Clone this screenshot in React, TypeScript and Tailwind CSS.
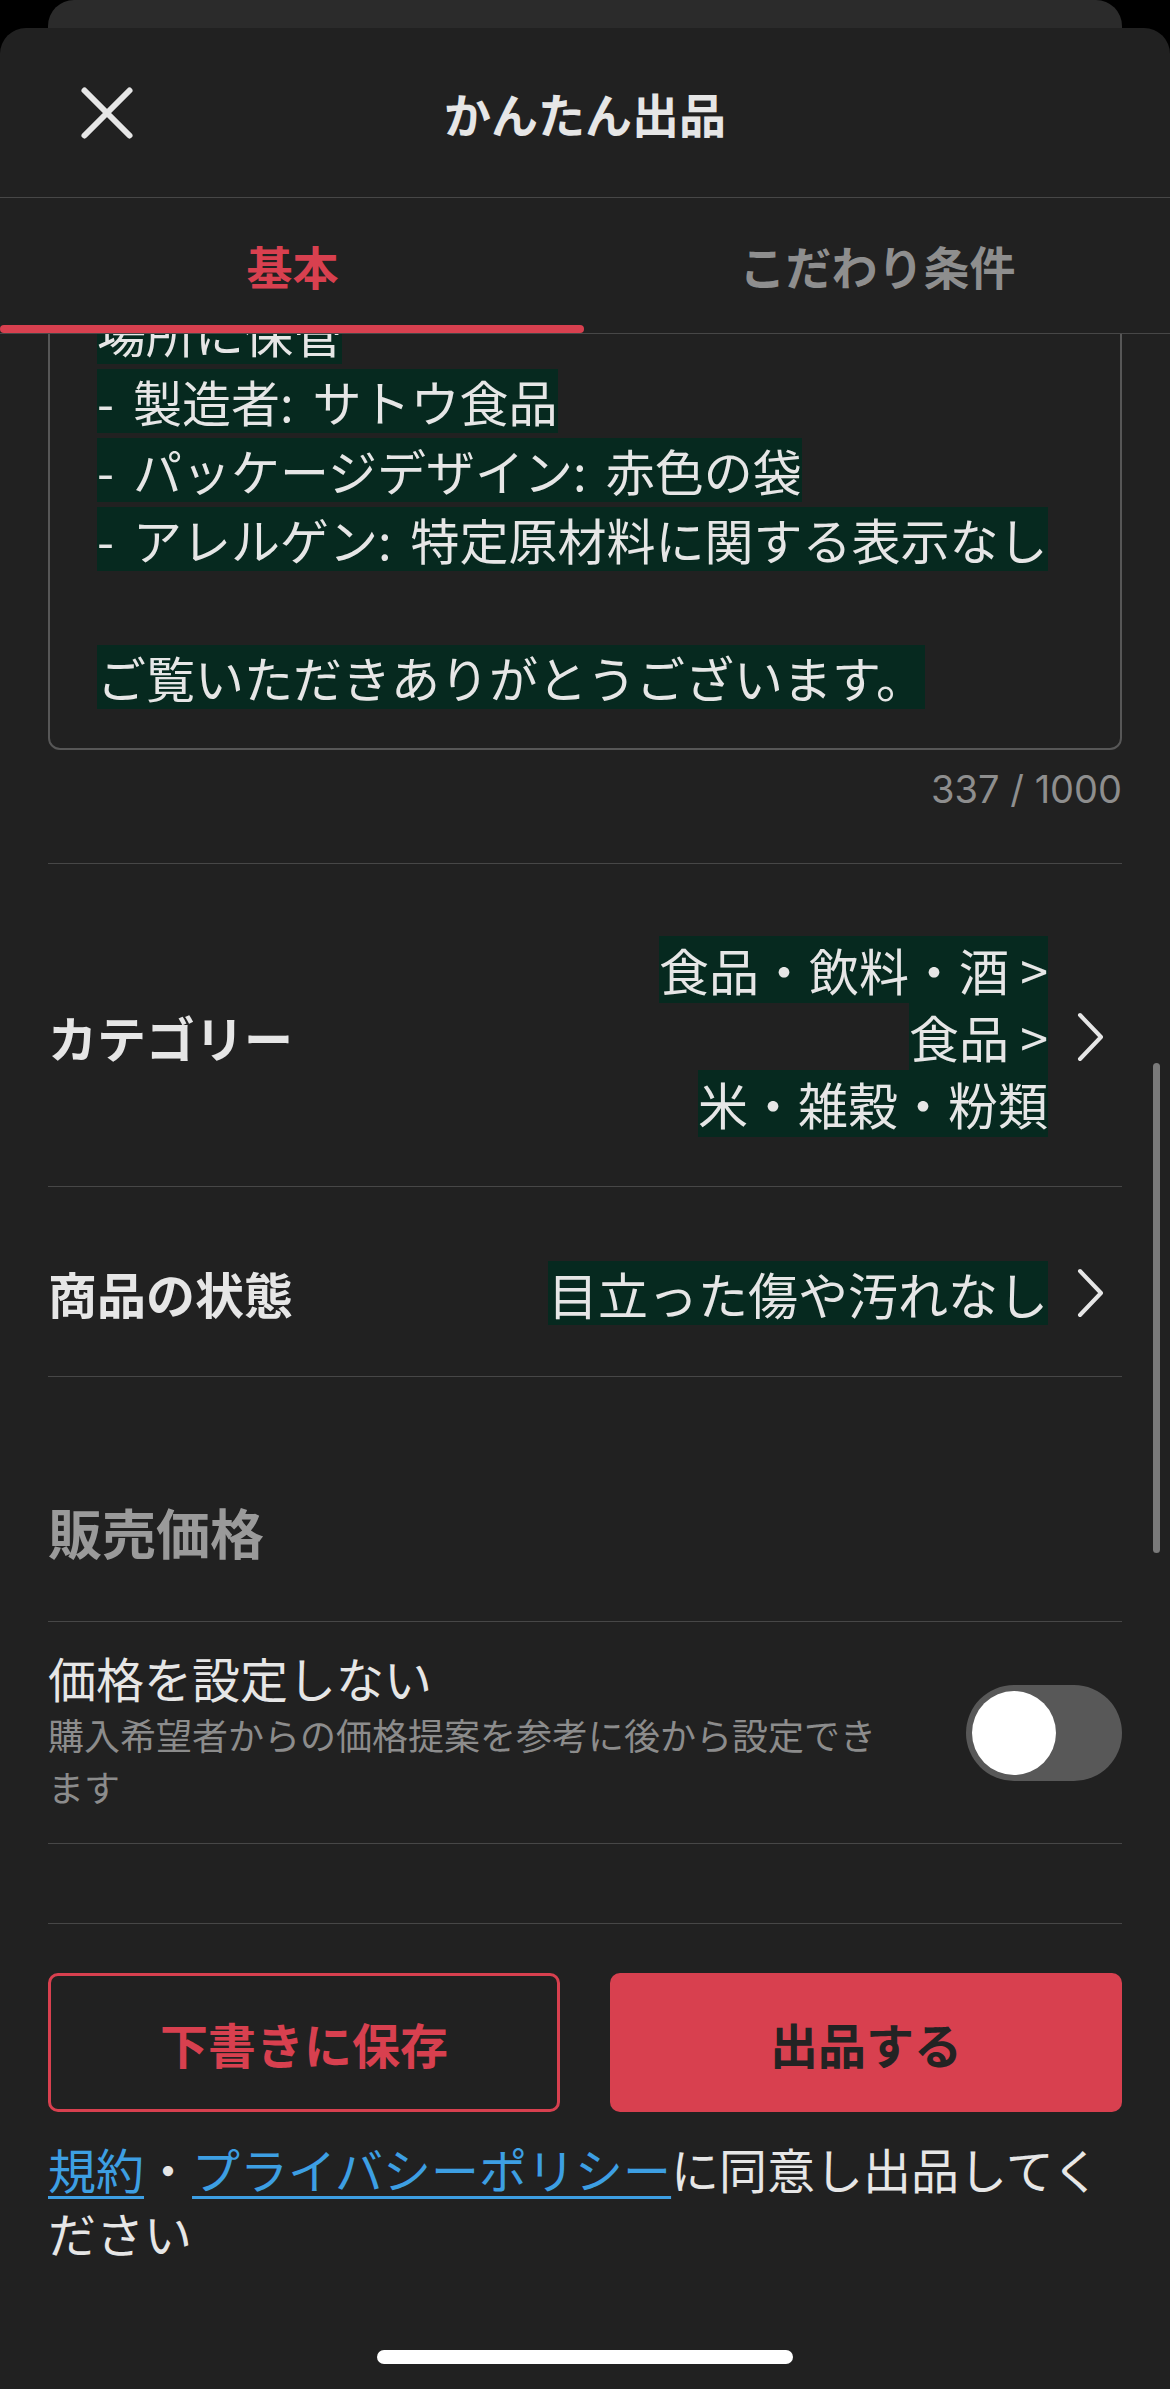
import React from "react";

const hl = "inline-block whitespace-pre bg-[#06291f]";

const descLines: string[] = [
  "- 保存方法: 直射日光を避け、涼しい",
  "場所に保管",
  "- 製造者: サトウ食品",
  "- パッケージデザイン: 赤色の袋",
  "- アレルゲン: 特定原材料に関する表示なし",
  "",
  "ご覧いただきありがとうございます。",
];

const categoryLines = ["食品・飲料・酒 >", "食品 >", "米・雑穀・粉類"];

// ascii "- " and ": " are a bit wider in the original font
function DescText({ text }: { text: string }) {
  const parts = text.split(/(- |: )/);
  return (
    <>
      {parts.map((p, i) =>
        p === "- " || p === ": " ? (
          <span key={i} className="tracking-[4px]">
            {p}
          </span>
        ) : (
          <React.Fragment key={i}>{p}</React.Fragment>
        )
      )}
    </>
  );
}

function Chevron() {
  return (
    <svg width="28" height="50" viewBox="0 0 28 50" className="ml-[29px] mr-[17px] shrink-0">
      <polyline
        points="3,3 24,25 3,47"
        fill="none"
        stroke="#e6e6e6"
        strokeWidth="4"
        strokeLinecap="round"
        strokeLinejoin="round"
      />
    </svg>
  );
}

const App: React.FC = () => {
  return (
    <div className="w-[1170px] h-[2389px] overflow-hidden bg-black font-['Noto_Sans_CJK_JP','Noto_Sans',sans-serif] text-[#e6e6e6]">
      {/* sheet behind */}
      <div className="mx-[48px] h-[28px] rounded-t-[26px] bg-[#2b2b2b]" />

      <div className="relative flex h-[2361px] flex-col rounded-t-[26px] bg-[#212121]">
        {/* header */}
        <div className="grid h-[170px] grid-cols-[1fr_auto_1fr] items-center border-b border-[#474747]">
          <div className="pl-[77px]">
            <svg width="60" height="60" viewBox="0 0 60 60">
              <path
                d="M7.5 7.5 L52.5 52.5 M52.5 7.5 L7.5 52.5"
                stroke="#e6e6e6"
                strokeWidth="6"
                strokeLinecap="round"
              />
            </svg>
          </div>
          <h1 className="text-[47px] font-bold leading-none">かんたん出品</h1>
          <div />
        </div>

        {/* tabs */}
        <div className="relative flex h-[136px] border-b border-[#474747]">
          <div className="flex flex-1 items-center justify-center text-[46px] font-bold text-[#d8404f]">
            基本
          </div>
          <div className="flex flex-1 items-center justify-center text-[46px] font-bold text-[#8e8e8e]">
            こだわり条件
          </div>
          <div className="absolute bottom-0 left-0 h-[8px] w-[584px] rounded-full bg-[#d8404f]" />
        </div>

        {/* scroll content */}
        <div className="flex flex-1 flex-col overflow-hidden px-[48px]">
          {/* description textarea */}
          <div className="-mt-[110px] rounded-[12px] border-2 border-[#575757] pb-[39px] pl-[47px] pr-[20px] text-[49px]">
            {descLines.map((line, i) => (
              <div key={i} className="h-[69px] overflow-hidden whitespace-pre">
                {line && (
                  <span className={`${hl} h-[64px] leading-[64px]`}>
                    <DescText text={line} />
                  </span>
                )}
              </div>
            ))}
          </div>
          <div className="mt-[16px] text-right font-['Inter','Noto_Sans',sans-serif] text-[38px] leading-[46px] text-[#8e8e8e]">
            337 / 1000
          </div>

          {/* category */}
          <div className="mt-[51px] flex items-center border-t border-[#474747] pb-[49px] pt-[72px]">
            <div className="text-[49px] font-bold leading-[64px]">カテゴリー</div>
            <div className="ml-auto flex flex-col items-end text-[50px]">
              {categoryLines.map((l) => (
                <span key={l} className={`${hl} h-[67px] leading-[67px]`}>
                  {l}
                </span>
              ))}
            </div>
            <Chevron />
          </div>

          {/* condition */}
          <div className="flex h-[190px] items-center border-t border-[#474747] pt-[23px]">
            <div className="text-[49px] font-bold leading-[64px]">商品の状態</div>
            <div className="ml-auto flex text-[50px] leading-[64px]">
              <span className={`${hl} h-[64px] leading-[64px]`}>目立った傷や汚れなし</span>
            </div>
            <Chevron />
          </div>

          {/* price heading */}
          <div className="border-t border-[#474747] pb-[57px] pt-[123px]">
            <h2 className="text-[54px] font-bold leading-[64px] text-[#9a9a9a]">販売価格</h2>
          </div>

          {/* no price toggle */}
          <div className="flex h-[222px] items-center border-t border-[#474747]">
            <div className="w-[850px] pb-[6px]">
              <div className="text-[48px] leading-[60px]">価格を設定しない</div>
              <p className="mt-[1px] text-[36px] leading-[52px] text-[#8c8c8c]">
                購入希望者からの価格提案を参考に後から設定できます
              </p>
            </div>
            <div className="ml-auto flex h-[96px] w-[156px] items-center rounded-full bg-[#585858] px-[6px]">
              <div className="h-[84px] w-[84px] rounded-full bg-white" />
            </div>
          </div>

          <div className="h-[80px] border-t border-[#474747]" />

          {/* actions */}
          <div className="border-t border-[#474747] pt-[49px]">
            <div className="grid grid-cols-2 gap-[50px]">
              <button className="flex h-[139px] items-center justify-center rounded-[10px] border-[3px] border-[#d8404f] text-[48px] font-bold text-[#d8404f]">
                下書きに保存
              </button>
              <button className="flex h-[139px] items-center justify-center rounded-[10px] bg-[#d8404f] text-[48px] font-bold text-[#232323]">
                出品する
              </button>
            </div>
            <p className="mt-[24px] text-[48px] leading-[64px]">
              <span className="text-[#3d9fe3] underline decoration-[3px] underline-offset-[7px]">規約</span>
              ・
              <span className="text-[#3d9fe3] underline decoration-[3px] underline-offset-[7px]">
                プライバシーポリシー
              </span>
              に同意し出品してください
            </p>
          </div>

          {/* home indicator */}
          <div className="mb-[25px] mt-auto flex justify-center">
            <div className="h-[14px] w-[416px] rounded-full bg-white" />
          </div>
        </div>

        {/* scroll indicator */}
        <div className="absolute right-[10px] top-[1035px] h-[490px] w-[7px] rounded-full bg-[#7a7a7a]" />
      </div>
    </div>
  );
};

export default App;
